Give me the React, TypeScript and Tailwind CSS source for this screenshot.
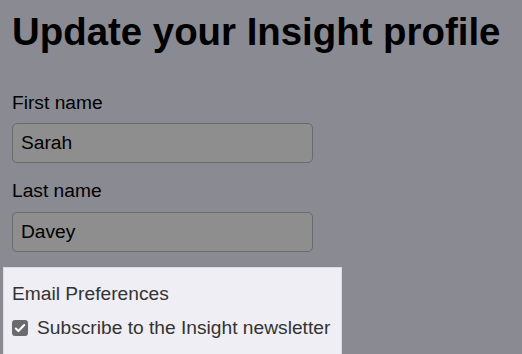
export default function App() {
  return (
    <div className="min-h-[354px] overflow-hidden bg-[#8a8a93] px-3 pt-[10px] font-['Liberation_Sans',Arial,sans-serif] text-black">
      <h1 className="text-[38.4px] font-bold leading-[44px]">Update your Insight profile</h1>

      <label className="mt-[37px] block text-[19.2px] leading-[23px]">First name</label>
      <input
        readOnly
        value="Sarah"
        className="mt-[9px] block h-[40px] w-[301px] rounded-[5px] border border-[#6a6a6d] bg-[#8e8e8f] px-[8px] text-[19.2px] text-black outline-none"
      />

      <label className="mt-[16px] block text-[19.2px] leading-[23px]">Last name</label>
      <input
        readOnly
        value="Davey"
        className="mt-[10px] block h-[40px] w-[301px] rounded-[5px] border border-[#6a6a6d] bg-[#8e8e8f] px-[8px] text-[19.2px] text-black outline-none"
      />

      {/* highlighted section */}
      <div className="-mx-[9px] mt-[15px] w-[339px] border border-[#dcdce3] bg-[#eeeef4] px-[8px] pb-[20px] pt-[14px] text-[#333]">
        <p className="text-[19.2px] leading-[23px]">Email Preferences</p>
        <label className="mt-[11px] flex items-center gap-[9px] text-[19.2px] leading-[23px]">
          <span className="flex h-[16px] w-[16px] shrink-0 items-center justify-center rounded-[3px] bg-[#6b6b6e]">
            <svg viewBox="0 0 16 16" className="h-[14px] w-[14px]" fill="none" stroke="white" strokeWidth="2.4" strokeLinecap="round" strokeLinejoin="round">
              <path d="M3.2 8.6l3 2.9L12.8 4.6" />
            </svg>
          </span>
          Subscribe to the Insight newsletter
        </label>
      </div>
    </div>
  );
}
